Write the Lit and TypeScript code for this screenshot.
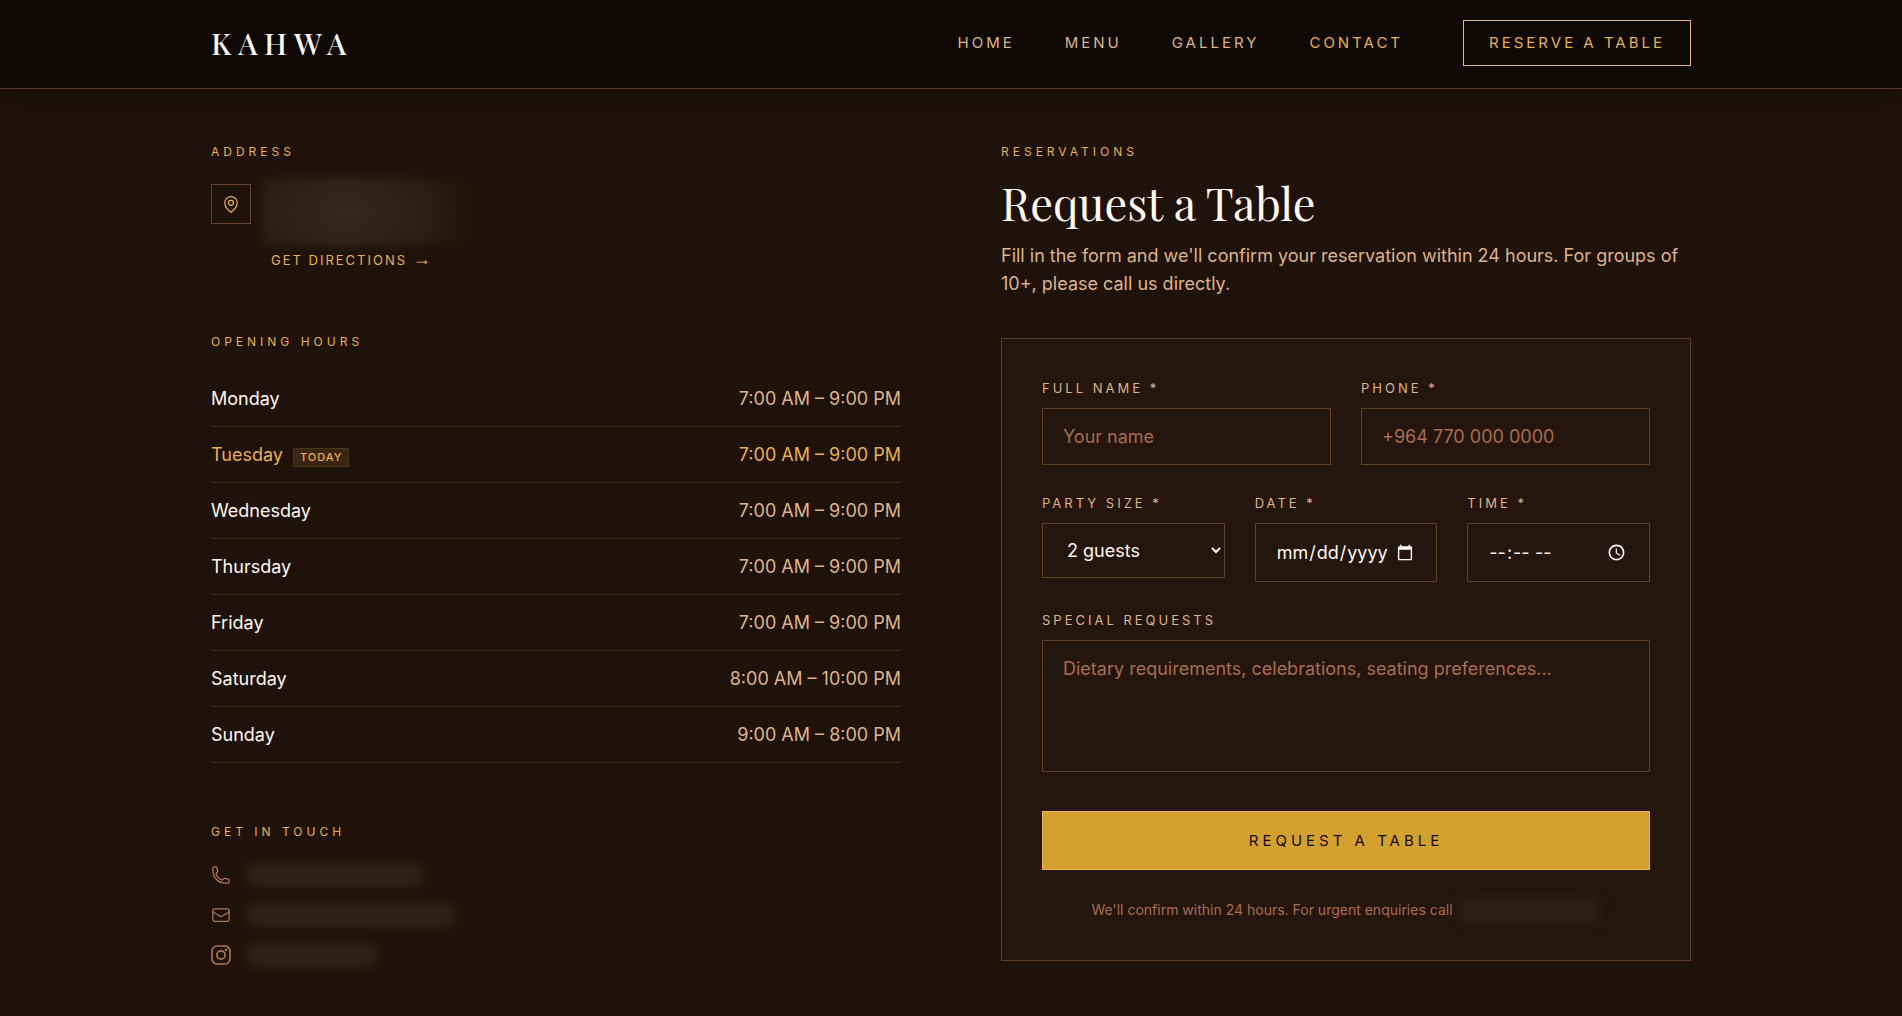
import { LitElement, html, css, svg } from "lit";
import { customElement } from "lit/decorators.js";
import { classMap } from "lit/directives/class-map.js";

const LINKS = ["Home", "Menu", "Gallery", "Contact"];

const HOURS = [
  { day: "Monday", time: "7:00 AM – 9:00 PM" },
  { day: "Tuesday", time: "7:00 AM – 9:00 PM", today: true },
  { day: "Wednesday", time: "7:00 AM – 9:00 PM" },
  { day: "Thursday", time: "7:00 AM – 9:00 PM" },
  { day: "Friday", time: "7:00 AM – 9:00 PM" },
  { day: "Saturday", time: "8:00 AM – 10:00 PM" },
  { day: "Sunday", time: "9:00 AM – 8:00 PM" },
];

const pin = svg`<path d="M15 10.5a3 3 0 1 1-6 0 3 3 0 0 1 6 0Z"/><path d="M19.5 10.5c0 7.142-7.5 11.25-7.5 11.25S4.5 17.642 4.5 10.5a7.5 7.5 0 1 1 15 0Z"/>`;
const phone = svg`<path d="M2.25 6.75c0 8.284 6.716 15 15 15h2.25a2.25 2.25 0 0 0 2.25-2.25v-1.372c0-.516-.351-.966-.852-1.091l-4.423-1.106c-.44-.11-.902.055-1.173.417l-.97 1.293c-.282.376-.769.542-1.21.38a12.035 12.035 0 0 1-7.143-7.143c-.162-.441.004-.928.38-1.21l1.293-.97c.363-.271.527-.734.417-1.173L6.963 3.102a1.125 1.125 0 0 0-1.091-.852H4.5A2.25 2.25 0 0 0 2.25 4.5v2.25Z"/>`;
const mail = svg`<path d="M21.75 6.75v10.5a2.25 2.25 0 0 1-2.25 2.25h-15a2.25 2.25 0 0 1-2.25-2.25V6.75m19.5 0A2.25 2.25 0 0 0 19.5 4.5h-15a2.25 2.25 0 0 0-2.25 2.25m19.5 0v.243a2.25 2.25 0 0 1-1.07 1.916l-7.5 4.615a2.25 2.25 0 0 1-2.36 0L3.32 8.91a2.25 2.25 0 0 1-1.07-1.916V6.75"/>`;
const instagram = svg`<rect x="1.2" y="1.2" width="21.6" height="21.6" rx="6"/><circle cx="12" cy="12" r="5"/><circle cx="18.2" cy="5.8" r="0.7" fill="currentColor"/>`;

@customElement("app-root")
export class AppRoot extends LitElement {
  static styles = css`
    :host {
      display: block;
      min-height: 100vh;
      background: #1f120a;
      color: #fff8ee;
      color-scheme: dark;
      font-family: Inter, "Liberation Sans", sans-serif;
      font-size: 18px;
      line-height: 28px;
    }
    * { box-sizing: border-box; }
    a { color: inherit; text-decoration: none; }
    h1, h2, p, ul { margin: 0; padding: 0; }
    svg { display: block; fill: none; stroke: currentColor; stroke-linecap: round; stroke-linejoin: round; }

    .bar {
      background: #0e0905;
      border-bottom: 1px solid #5a3c28;
      box-shadow: 0 4px 24px rgba(14, 9, 5, 0.5);
    }
    .wrap { max-width: 1520px; margin: 0 auto; padding: 0 20px; }
    .bar .wrap { display: flex; align-items: center; justify-content: space-between; padding-top: 20px; padding-bottom: 22px; }
    .logo { font-family: "Playfair Display", "Liberation Serif", serif; font-size: 30px; line-height: 46px; font-weight: 500; letter-spacing: 7px; }
    .menu { display: flex; align-items: center; gap: 50px; font-size: 15px; line-height: 20px; letter-spacing: 3px; text-transform: uppercase; color: #deb48a; }
    .menu .on { color: #e8b050; }
    .reserve { margin-left: 10px; padding: 12px 25px; border: 1px solid #e6b878; color: #e8b050; }

    .cols { display: grid; grid-template-columns: 1fr 1fr; gap: 100px; padding-top: 53px; padding-bottom: 52px; }
    .eyebrow { font-size: 12px; line-height: 20px; font-weight: 400; letter-spacing: 4px; text-transform: uppercase; color: #e8b050; }

    .address { display: grid; grid-template-columns: 40px 1fr; gap: 0 20px; margin-top: 22px; }
    .pinbox { width: 40px; height: 40px; border: 1px solid #6b432c; color: #e8b050; display: grid; place-items: center; }
    .place {
      width: 210px;
      height: 68px;
      margin: -6px 0 -6px -10px;
      background: radial-gradient(ellipse 120px 80px at 40% 50%, #35291d, #2b1e14 70%, #21140b);
      filter: blur(4px);
    }
    .directions { grid-column: 2; margin-top: 10px; line-height: 20px; font-size: 13px; letter-spacing: 2px; text-transform: uppercase; color: #e8b050; }
    .arrow { font-family: "Liberation Sans", sans-serif; font-size: 18px; line-height: 18px; }

    .hours-head { margin-top: 62px; }
    .hours { width: 100%; margin-top: 18px; border-collapse: collapse; }
    .hours th, .hours td { height: 56px; padding: 2px 0 0; border-bottom: 1px solid #3a281b; font-weight: 400; }
    .hours th { text-align: left; }
    .hours td { text-align: right; color: #deb48a; }
    .hours .now th, .hours .now td { color: #e8b050; }
    .tag { display: inline-block; margin-left: 10px; padding: 0 6px; border: 1px solid #4d3518; background: #3a2610; font-size: 11px; line-height: 17px; font-weight: 500; letter-spacing: 1px; }

    .touch-head { margin-top: 59px; }
    .touch { list-style: none; display: grid; gap: 12px; margin-top: 19px; color: #ae7854; }
    .touch li { display: flex; align-items: center; gap: 14px; height: 28px; }
    .veil { height: 26px; border-radius: 12px; filter: blur(6px); background: #302116; }
    .w1 { width: 178px; }
    .w2 { width: 210px; }
    .w3 { width: 134px; }

    .title { margin-top: 8px; font-family: "Playfair Display", "Liberation Serif", serif; font-size: 45px; line-height: 64px; font-weight: 400; }
    .lead { margin-top: 8px; color: #deb48a; }
    .card { margin-top: 40px; padding: 40px; border: 1px solid #5f3b24; background: #24150d; }
    .row { display: grid; gap: 30px; align-items: start; margin-bottom: 29px; }
    .two { grid-template-columns: 1fr 1fr; }
    .three { grid-template-columns: 1fr 1fr 1fr; }
    .field { display: grid; grid-template-columns: minmax(0, 1fr); min-width: 0; }
    .field label { font-size: 13px; line-height: 18px; margin-bottom: 11px; letter-spacing: 3px; text-transform: uppercase; color: #deb48a; }
    .field input, .field select, .field textarea {
      display: block;
      width: 100%;
      min-width: 0;
      margin: 0;
      padding: 16px 20px;
      border: 1px solid #613f24;
      border-radius: 0;
      background-color: transparent;
      color: #fff8ee;
      font: inherit;
      line-height: 23px;
      outline: none;
    }
    .field select { padding: 15px 20px; }
    .field textarea { height: 132px; line-height: 24px; resize: none; }
    ::placeholder { color: #a86e4e; opacity: 1; }
    option { background: #24150d; }
    .send {
      display: block;
      width: 100%;
      margin-top: 39px;
      padding: 18px;
      border: 1px solid #eab551;
      background: #d4a02f;
      color: #140b05;
      font: 400 15px/21px Inter, "Liberation Sans", sans-serif;
      letter-spacing: 4px;
      text-transform: uppercase;
    }
    .note { display: flex; align-items: center; justify-content: center; gap: 6px; margin-top: 30px; font-size: 14px; line-height: 20px; color: #a86e4e; }
    .note .veil { width: 142px; margin: -3px 0; background: #2f1f14; }
  `;

  private icon(shape: unknown, size: number, width = 1.5) {
    return html`<svg width=${size} height=${size} viewBox="0 0 24 24" stroke-width=${width} aria-hidden="true">${shape}</svg>`;
  }

  render() {
    return html`
      <header class="bar">
        <div class="wrap">
          <a class="logo" href="#">KAHWA</a>
          <nav class="menu">
            ${LINKS.map((l) => html`<a href="#" class=${classMap({ on: l === "Contact" })}>${l}</a>`)}
            <a href="#" class="reserve">Reserve a Table</a>
          </nav>
        </div>
      </header>
      <main class="wrap cols">
        <section>
          <h2 class="eyebrow">Address</h2>
          <div class="address">
            <div class="pinbox">${this.icon(pin, 20)}</div>
            <div class="place"></div>
            <a class="directions" href="#">Get Directions <span class="arrow">→</span></a>
          </div>
          <h2 class="eyebrow hours-head">Opening Hours</h2>
          <table class="hours">
            <tbody>
              ${HOURS.map(
                (h) => html`<tr class=${classMap({ now: !!h.today })}>
                  <th scope="row">${h.day}${h.today ? html`<span class="tag">TODAY</span>` : ""}</th>
                  <td>${h.time}</td>
                </tr>`
              )}
            </tbody>
          </table>
          <h2 class="eyebrow touch-head">Get in Touch</h2>
          <ul class="touch">
            <li>${this.icon(phone, 20)}<span class="veil w1"></span></li>
            <li>${this.icon(mail, 20)}<span class="veil w2"></span></li>
            <li>${this.icon(instagram, 20, 2)}<span class="veil w3"></span></li>
          </ul>
        </section>
        <section>
          <p class="eyebrow">Reservations</p>
          <h1 class="title">Request a Table</h1>
          <p class="lead">Fill in the form and we'll confirm your reservation within 24 hours. For groups of 10+, please call us directly.</p>
          <form class="card" @submit=${(e: Event) => e.preventDefault()}>
            <div class="row two">
              <div class="field"><label for="name">Full Name *</label><input id="name" type="text" placeholder="Your name" /></div>
              <div class="field"><label for="phone">Phone *</label><input id="phone" type="tel" placeholder="+964 770 000 0000" /></div>
            </div>
            <div class="row three">
              <div class="field">
                <label for="party">Party Size *</label>
                <select id="party">
                  <option>1 guest</option>
                  <option selected>2 guests</option>
                  <option>3 guests</option>
                  <option>4 guests</option>
                </select>
              </div>
              <div class="field"><label for="date">Date *</label><input id="date" type="date" /></div>
              <div class="field"><label for="time">Time *</label><input id="time" type="time" /></div>
            </div>
            <div class="field">
              <label for="requests">Special Requests</label>
              <textarea id="requests" placeholder="Dietary requirements, celebrations, seating preferences..."></textarea>
            </div>
            <button class="send" type="submit">Request a Table</button>
            <p class="note">We'll confirm within 24 hours. For urgent enquiries call<span class="veil"></span></p>
          </form>
        </section>
      </main>
    `;
  }
}
